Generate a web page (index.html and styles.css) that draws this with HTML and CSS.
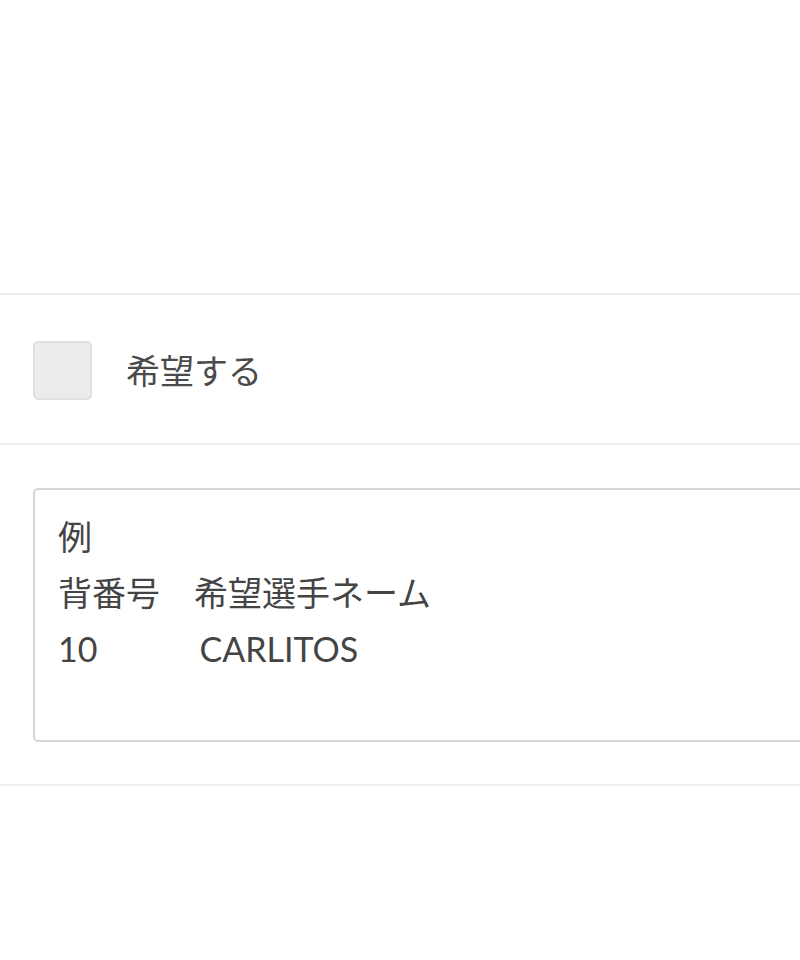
FILE: index.html
```html
<!DOCTYPE html>
<html lang="ja">
<head>
<meta charset="utf-8">
<link rel="stylesheet" href="styles.css">
</head>
<body>
<div class="top-space"></div>
<div class="row row-check">
  <label class="check">
    <span class="box"></span>
    <span class="check-label">希望する</span>
  </label>
</div>
<div class="row row-area">
  <div class="area">例
背番号　希望選手ネーム
10　　　CARLITOS</div>
</div>
</body>
</html>
```

FILE: styles.css
```css
html, body {
  margin: 0;
  padding: 0;
  background: #ffffff;
}
body {
  font-family: Lato, "Noto Sans CJK JP", sans-serif;
  color: #444444;
  overflow: hidden;
}
.top-space {
  height: 293px;
  border-bottom: 2px solid #eeeeee;
}
.row {
  border-bottom: 2px solid #eeeeee;
  padding-left: 33px;
}
.row-check {
  height: 148px;
  display: flex;
  align-items: center;
}
.check {
  display: flex;
  align-items: center;
  gap: 34px;
}
.box {
  width: 55px;
  height: 55px;
  background: #ececec;
  border: 2px solid #e0e0e0;
  border-radius: 5px;
  margin-top: 2px;
}
.check-label {
  font-size: 34px;
  color: #4a4a4a;
}
.row-area {
  padding-top: 43px;
  padding-bottom: 42px;
}
.area {
  box-sizing: border-box;
  width: 820px;
  height: 254px;
  border: 2px solid #d6d6d6;
  border-radius: 5px;
  padding: 19px 23px 0;
  font-size: 34px;
  line-height: 56px;
  white-space: pre-wrap;
  color: #444444;
}
```
